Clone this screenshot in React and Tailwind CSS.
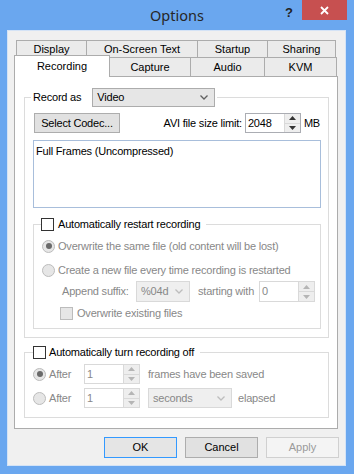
import React from "react";

const Tri = ({ up, c }) => (
  <svg width="7" height="4" viewBox="0 0 7 4">
    <path d={up ? "M0 4L3.5 0L7 4Z" : "M0 0L3.5 4L7 0Z"} fill={c} />
  </svg>
);

const Chevron = ({ c }) => (
  <svg width="8" height="5" viewBox="0 0 8 5">
    <path d="M0.5 0.5L4 4L7.5 0.5" fill="none" stroke={c} strokeWidth="1.3" />
  </svg>
);

function Spin({ value, className, disabled }) {
  const arrow = disabled ? "#b5b5b5" : "#333";
  return (
    <div className={`flex bg-white border ${disabled ? "border-[#d9d9d9]" : "border-[#abadb3]"} ${className}`}>
      <div className={`flex-1 pl-[2px] pt-[3px] ${disabled ? "text-[#888888]" : ""}`}>{value}</div>
      <div className="w-[16px] flex flex-col border-l border-[#d9d9d9] bg-[#eeeeee]">
        <div className="flex-1 flex items-center justify-center border-b border-[#d9d9d9]">
          <Tri up c={arrow} />
        </div>
        <div className="flex-1 flex items-center justify-center">
          <Tri c={arrow} />
        </div>
      </div>
    </div>
  );
}

function Combo({ value, className, disabled }) {
  return (
    <div
      className={`flex items-center justify-between pl-[4px] pr-[6px] border ${
        disabled
          ? "bg-[#efefef] border-[#d9d9d9] text-[#888888]"
          : "bg-[#e6e6e6] border-[#acacac]"
      } ${className}`}
    >
      <span>{value}</span>
      <Chevron c={disabled ? "#bdbdbd" : "#606060"} />
    </div>
  );
}

function Radio({ checked }) {
  return (
    <div className="w-[13px] h-[13px] rounded-full border border-[#bcbcbc] bg-[#e6e6e6] flex items-center justify-center shrink-0">
      {checked && <div className="w-[6px] h-[6px] rounded-full bg-[#6a6a6a]" />}
    </div>
  );
}

function Check({ disabled }) {
  return (
    <div
      className={`w-[13px] h-[13px] border shrink-0 ${
        disabled ? "border-[#bcbcbc] bg-[#e6e6e6]" : "border-[#333333] bg-white"
      }`}
    />
  );
}

const topTabs = [
  ["Display", "w-[70px]"],
  ["On-Screen Text", "w-[111px]"],
  ["Startup", "w-[70px]"],
  ["Sharing", "w-[69px] border-r"],
];
const bottomTabs = [
  ["Capture", "w-[80px]"],
  ["Audio", "w-[74px]"],
  ["KVM", "w-[73px] border-r"],
];

export default function App() {
  return (
    <div className="w-[354px] h-[474px] bg-[#6aa7ef] font-['Liberation_Sans',Arial,sans-serif] text-[11px] leading-[13px] text-black">
      {/* title bar */}
      <div className="h-[30px] grid grid-cols-[1fr_auto_1fr]">
        <div />
        <div className="pt-[5px] text-[14.5px] leading-[20px] text-[#262626] font-['Noto_Sans',sans-serif]">
          Options
        </div>
        <div className="flex justify-end items-start">
          <div className="pt-[6px] mr-[9px] text-[13px] font-bold text-[#222]">?</div>
          <div className="w-[45px] h-[20px] mr-[7px] bg-[#c75050] flex items-center justify-center">
            <svg width="9" height="9" viewBox="0 0 9 9">
              <path d="M1 1L8 8M8 1L1 8" stroke="white" strokeWidth="1.8" />
            </svg>
          </div>
        </div>
      </div>

      {/* client area */}
      <div className="ml-[7px] w-[339px] h-[436px] bg-[#f0f0f0] border border-[#d4e3f6] pl-[6px] pt-[9px]">
        {/* tab rows */}
        <div className="flex ml-[2px] h-[17px]">
          {topTabs.map(([t, w]) => (
            <div key={t} className={`${w} border-l border-t border-[#acacac] bg-[#ebebeb] flex items-center justify-center`}>
              {t}
            </div>
          ))}
        </div>
        <div className="flex h-[19px] items-start relative z-10">
          <div className="w-[96px] h-[22px] -mt-[2px] border-l border-t border-r border-[#acacac] bg-white flex justify-center pt-[4px]">
            Recording
          </div>
          {bottomTabs.map(([t, w]) => (
            <div key={t} className={`${w} h-[19px] border-t border-[#acacac] bg-[#ebebeb] flex items-center justify-center ${t === "Capture" ? "" : "border-l"}`}>
              {t}
            </div>
          ))}
        </div>

        {/* tab panel */}
        <div className="w-[324px] h-[353px] border border-[#acacac] bg-white pl-[9px] pt-[11px] tracking-[-0.2px]">
          <fieldset className="w-[305px] border border-[#dcdcdc] pl-[8px] pr-[7px] pb-[8px]">
            <legend className="-ml-[2px] px-[2px]">
              <div className="flex items-center h-[19px]">
                <span>Record as</span>
                <Combo value="Video" className="ml-[11px] w-[123px] h-[19px]" />
              </div>
            </legend>
            <div className="flex items-center h-[20px] mt-[6px]">
              <div className="ml-[1px] w-[86px] h-[20px] border border-[#adadad] bg-[#e1e1e1] flex items-center justify-center">
                Select Codec...
              </div>
              <div className="flex-1" />
              <span>AVI file size limit:</span>
              <Spin value="2048" className="ml-[3px] w-[56px] h-[20px]" />
              <span className="ml-[3px] mr-[1px]">MB</span>
            </div>
            <div className="mt-[7px] h-[68px] border border-[#a8bedb] pl-[2px] pt-[4px]">
              Full Frames (Uncompressed)
            </div>

            <fieldset className="mt-[9px] border border-[#dcdcdc] pl-[8px] pb-[8px]">
              <legend className="-ml-[1px] pr-[6px]">
                <div className="flex items-center gap-[4px] h-[14px]">
                  <Check />
                  <span>Automatically restart recording</span>
                </div>
              </legend>
              <div className="text-[#888888]">
                <div className="flex items-center gap-[3px] h-[16px] mt-[7px]">
                  <Radio checked />
                  <span>Overwrite the same file (old content will be lost)</span>
                </div>
                <div className="flex items-center gap-[3px] h-[16px] mt-[8px]">
                  <Radio />
                  <span>Create a new file every time recording is restarted</span>
                </div>
                <div className="flex items-center h-[21px] mt-[3px] ml-[20px]">
                  <span className="w-[74px]">Append suffix:</span>
                  <Combo value="%04d" disabled className="w-[54px] h-[21px]" />
                  <span className="ml-[8px]">starting with</span>
                  <Spin value="0" disabled className="ml-[5px] w-[56px] h-[21px]" />
                </div>
                <div className="flex items-center gap-[4px] h-[14px] mt-[4px] ml-[18px]">
                  <Check disabled />
                  <span>Overwrite existing files</span>
                </div>
              </div>
            </fieldset>
          </fieldset>

          <fieldset className="mt-[7px] w-[305px] border border-[#dcdcdc] pl-[8px] pb-[9px]">
            <legend className="pr-[6px]">
              <div className="flex items-center gap-[3px] h-[14px]">
                <Check />
                <span>Automatically turn recording off</span>
              </div>
            </legend>
            <div className="text-[#888888]">
              <div className="flex items-center h-[20px] mt-[5px]">
                <div className="w-[51px] flex items-center gap-[3px]">
                  <Radio checked />
                  <span>After</span>
                </div>
                <Spin value="1" disabled className="w-[56px] h-[20px]" />
                <span className="ml-[8px]">frames have been saved</span>
              </div>
              <div className="flex items-center h-[20px] mt-[4px]">
                <div className="w-[51px] flex items-center gap-[3px]">
                  <Radio />
                  <span>After</span>
                </div>
                <Spin value="1" disabled className="w-[56px] h-[20px]" />
                <Combo value="seconds" disabled className="ml-[8px] w-[84px] h-[20px]" />
                <span className="ml-[6px]">elapsed</span>
              </div>
            </div>
          </fieldset>
        </div>

        {/* buttons */}
        <div className="flex justify-end gap-[8px] mt-[8px] pr-[6px]">
          <div className="w-[73px] h-[21px] border border-[#3399ff] bg-[#e5e5e5] flex items-center justify-center">OK</div>
          <div className="w-[73px] h-[21px] border border-[#adadad] bg-[#e1e1e1] flex items-center justify-center">Cancel</div>
          <div className="w-[73px] h-[21px] border border-[#d0d0d0] bg-[#f4f4f4] text-[#9a9a9a] flex items-center justify-center">Apply</div>
        </div>
      </div>
    </div>
  );
}
